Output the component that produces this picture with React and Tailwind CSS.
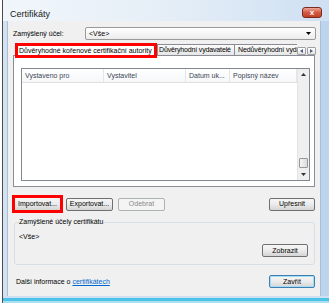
import React from "react";

const font = { fontFamily: '"Liberation Sans", Arial, sans-serif' };

function TriangleDown({ className = "" }) {
  return (
    <svg width="5" height="3" viewBox="0 0 5 3" className={className}>
      <path d="M0 0 H5 L2.5 3 Z" fill="currentColor" />
    </svg>
  );
}

function TriangleUp({ className = "" }) {
  return (
    <svg width="5" height="3" viewBox="0 0 5 3" className={className}>
      <path d="M0 3 H5 L2.5 0 Z" fill="currentColor" />
    </svg>
  );
}

export default function App() {
  return (
    <div className="w-[329px] h-[303px] bg-white overflow-hidden flex text-black" style={font}>
      {/* window */}
      <div className="ml-[2px] w-[327px] h-full flex flex-col border-l border-[#4b4b4b] bg-[#c6daef]">
        {/* title bar */}
        <div className="h-[21px] flex items-start justify-between bg-linear-to-r from-[#f1f6fb] via-[#e5eef7] to-[#cfe0f2]">
          <span className="mt-[10px] ml-[7px] text-[9px] leading-[9px] text-[#1a1a1a]">Certifikáty</span>
          <div className="mt-[7px] mr-[7px] w-[20px] h-[11px] rounded-[3px] border border-[#7a2c20] bg-linear-to-b from-[#eaa597] via-[#d45a43] to-[#c23e26] flex items-center justify-center">
            <span className="text-white text-[8px] leading-none font-bold">x</span>
          </div>
        </div>

        {/* middle: frame + client + frame */}
        <div className="h-[275px] flex">
          <div className="w-[4px] bg-[#d3e2f3]" />

          {/* client area */}
          <div className="w-[314px] h-full bg-[#f0f0f0] border-x border-[#aebfd3] pl-[5px] pr-[4px] flex flex-col text-[7px] leading-[8px]">
            {/* intended purpose */}
            <div className="mt-[6px] h-[13px] flex items-center">
              <span className="w-[72px]">Zamýšlený účel:</span>
              <div className="w-[231px] h-[13px] flex items-center justify-between pl-[3px] pr-[4px] rounded-[2px] border border-[#9a9a9a] bg-linear-to-b from-white to-[#ececec]">
                <span>&lt;Vše&gt;</span>
                <TriangleDown className="text-black" />
              </div>
            </div>

            {/* tabs */}
            <div className="mt-[3px] h-[12px] flex items-start">
              <div className="relative z-10 ml-[2px] w-[142px] h-[15px] shrink-0 border-[3px] border-[#ff0000] bg-white flex items-center pl-[1px] whitespace-nowrap">
                Důvěryhodné kořenové certifikační autority
              </div>
              <div className="mt-[1px] w-[78px] h-[11px] shrink-0 border border-b-0 border-[#898c95] bg-linear-to-b from-[#fbfbfb] to-[#e6e6e6] flex items-center pl-[1px] whitespace-nowrap overflow-hidden tracking-[-0.15px]">
                Důvěryhodní vydavatelé
              </div>
              <div className="mt-[1px] w-[62px] h-[11px] shrink-0 border-t border-[#898c95] bg-linear-to-b from-[#fbfbfb] to-[#e6e6e6] flex items-center pl-[3px] whitespace-nowrap overflow-hidden tracking-[-0.1px]">
                Nedůvěryhodní vydavatelé
              </div>
              <div className="mt-[4px] flex gap-[1px]">
                <div className="w-[9px] h-[8px] rounded-[1px] border border-[#a0a0a0] bg-linear-to-b from-white to-[#e3e3e3] flex items-center justify-center">
                  <svg width="3" height="4" viewBox="0 0 3 4"><path d="M3 0 V4 L0 2 Z" fill="#4d6185" /></svg>
                </div>
                <div className="w-[9px] h-[8px] rounded-[1px] border border-[#a0a0a0] bg-linear-to-b from-white to-[#e3e3e3] flex items-center justify-center">
                  <svg width="3" height="4" viewBox="0 0 3 4"><path d="M0 0 V4 L3 2 Z" fill="#4d6185" /></svg>
                </div>
              </div>
            </div>

            {/* tab panel */}
            <div className="mr-[1px] h-[132px] border border-[#898c95] bg-white">
              <div className="ml-[7px] mt-[12px] w-[289px] h-[113px] border border-[#828790] flex">
                <div className="w-[275px] flex flex-col">
                  <div className="h-[14px] flex border-b border-[#e0e0e0] bg-linear-to-b from-white to-[#f6f7f9] text-[#3a4656]">
                    <div className="w-[82px] pl-[3px] flex items-center border-r border-[#e3e6ea]">Vystaveno pro</div>
                    <div className="w-[82px] pl-[3px] flex items-center border-r border-[#e3e6ea]">Vystavitel</div>
                    <div className="w-[44px] pl-[3px] flex items-center border-r border-[#e3e6ea] whitespace-nowrap">Datum uk...</div>
                    <div className="w-[67px] pl-[3px] flex items-center border-r border-[#e3e6ea]">Popisný název</div>
                  </div>
                  <div className="flex-1 bg-white" />
                </div>
                {/* scrollbar */}
                <div className="w-[12px] flex flex-col bg-[#efefef] border-l border-[#e4e4e4]">
                  <div className="h-[11px] flex items-center justify-center">
                    <TriangleUp className="text-[#333]" />
                  </div>
                  <div className="flex-1 flex flex-col justify-end">
                    <div className="mx-[1px] h-[10px] rounded-[1px] border border-[#979797] bg-linear-to-r from-[#f4f4f4] to-[#dcdcdc]" />
                  </div>
                  <div className="h-[12px] flex items-center justify-center">
                    <TriangleDown className="text-[#333]" />
                  </div>
                </div>
              </div>
            </div>

            {/* buttons */}
            <div className="mt-[8px] h-[18px] flex items-center">
              <div className="-ml-[1px] w-[51px] h-[18px] border-[3px] border-[#ff0000]">
                <div className="w-full h-full rounded-[1px] bg-linear-to-b from-[#f6f6f6] via-[#ebebeb] to-[#d4d4d4] flex items-center justify-center">
                  Importovat...
                </div>
              </div>
              <div className="ml-[3px] w-[47px] h-[13px] rounded-[2px] border border-[#707070] bg-linear-to-b from-[#f6f6f6] via-[#ebebeb] to-[#d4d4d4] flex items-center justify-center">
                Exportovat...
              </div>
              <div className="ml-[5px] w-[47px] h-[13px] rounded-[2px] border border-[#adb2b5] bg-[#f4f4f4] text-[#8a8a8a] flex items-center justify-center">
                Odebrat
              </div>
              <div className="ml-auto mr-[1px] w-[46px] h-[13px] rounded-[2px] border border-[#707070] bg-linear-to-b from-[#f6f6f6] via-[#ebebeb] to-[#d4d4d4] flex items-center justify-center">
                Upřesnit
              </div>
            </div>

            {/* group box */}
            <fieldset className="mt-[5px] mx-[1px] h-[47px] rounded-[3px] border border-[#d5dfe5] px-[4px]">
              <legend className="leading-[8px] pr-[1px]">Zamýšlené účely certifikátu</legend>
              <div className="mt-[7px] leading-[8px]">&lt;Vše&gt;</div>
              <div className="mt-[3px] flex justify-end pr-[2px]">
                <div className="w-[46px] h-[13px] rounded-[2px] border border-[#707070] bg-linear-to-b from-[#f6f6f6] via-[#ebebeb] to-[#d4d4d4] flex items-center justify-center">
                  Zobrazit
                </div>
              </div>
            </fieldset>

            {/* bottom row */}
            <div className="mt-[10px] h-[13px] flex items-center justify-between">
              <span className="pl-[3px]">
                Další informace o{" "}
                <span className="text-[#0066cc] underline">certifikátech</span>
              </span>
              <div className="mr-[1px] w-[46px] h-[13px] rounded-[2px] border border-[#3c7fb1] shadow-[inset_0_0_0_1px_#a6dcf7] bg-linear-to-b from-[#f6f6f6] via-[#ebebeb] to-[#d4d4d4] flex items-center justify-center">
                Zavřít
              </div>
            </div>
          </div>

          <div className="flex-1 bg-[#bcd4ee]" />
        </div>

        {/* bottom frame */}
        <div className="h-[7px] flex flex-col">
          <div className="h-[2px] bg-[#cfe0f2]" />
          <div className="h-[3px] bg-[#4cc3e6]" />
          <div className="flex-1 bg-[#a9dff0]" />
        </div>
      </div>
    </div>
  );
}
